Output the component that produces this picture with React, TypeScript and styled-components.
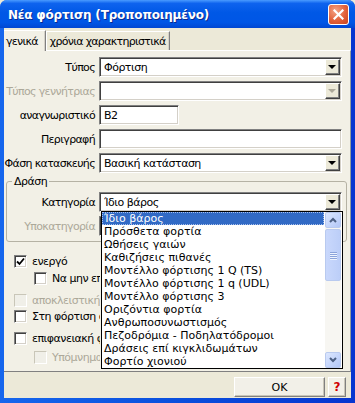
import React from 'react';
import styled, { createGlobalStyle } from 'styled-components';

const GlobalStyle = createGlobalStyle`
  html, body {
    margin: 0;
    padding: 0;
    background: #ECE9D8;
  }
  * {
    box-sizing: border-box;
  }
`;

const Window = styled.div`
  width: 355px;
  height: 403px;
  display: flex;
  flex-direction: column;
  background: linear-gradient(90deg, #1666ED 0%, #0A4FDD 50%, #0735D0 100%);
  border-radius: 7px 7px 0 0;
  font-family: "DejaVu Sans", Tahoma, sans-serif;
  font-size: 11px;
  letter-spacing: -0.5px;
  color: #000;
  overflow: hidden;
`;

const TitleBar = styled.div`
  height: 28px;
  flex: none;
  display: flex;
  align-items: center;
  justify-content: space-between;
  padding: 1px 6px 0 8px;
  background: linear-gradient(180deg, #4A9BFF 0%, #0E63EE 12%, #0058E6 45%, #0056E6 80%, #0147D2 100%);
`;

const Title = styled.span`
  color: #fff;
  font-family: "DejaVu Sans", sans-serif;
  font-weight: bold;
  font-size: 12px;
  letter-spacing: -0.2px;
  text-shadow: 1px 1px 0 #0B2A8F;
`;

const CloseButton = styled.div`
  width: 21px;
  height: 21px;
  border: 1px solid #fff;
  border-radius: 3px;
  background: radial-gradient(circle at 35% 30%, #F4A486 0%, #E2613A 55%, #C8431E 100%);
  display: flex;
  align-items: center;
  justify-content: center;
`;

const Client = styled.div`
  flex: 1;
  margin: 0 4px 5px;
  background: #ECE9D8;
  display: flex;
  flex-direction: column;
`;

const TabStrip = styled.div`
  height: 22px;
  flex: none;
  display: flex;
  align-items: flex-end;
`;

const Tab = styled.div<{ $active?: boolean }>`
  height: ${p => (p.$active ? 21 : 19)}px;
  padding: 0 ${p => (p.$active ? 7 : 3)}px 0 ${p => (p.$active ? 2 : 3)}px;
  display: flex;
  align-items: center;
  white-space: nowrap;
  letter-spacing: -0.7px;
  background: ${p => (p.$active ? '#F2F0E6' : '#ECE9D8')};
  border-top: 1px solid #fff;
  border-left: ${p => (p.$active ? '0' : '1px solid #fff')};
  border-right: 1px solid #808080;
  box-shadow: inset -1px 0 0 #D4D0C8;
  margin-bottom: ${p => (p.$active ? '-1px' : '0')};
  position: relative;
  z-index: ${p => (p.$active ? 1 : 0)};
`;

const Panel = styled.div`
  flex: 1;
  position: relative;
  background: #F2F0E6;
  border-top: 1px solid #fff;
  border-right: 1px solid #919B9C;
  border-bottom: 1px solid #808080;
  padding-top: 6px;
  display: flex;
  flex-direction: column;
`;

const FormGrid = styled.div<{ $labelWidth: number }>`
  display: grid;
  grid-template-columns: ${p => p.$labelWidth}px 243px;
  grid-auto-rows: 20px;
  column-gap: 4px;
  row-gap: 4px;
`;

const Label = styled.div<{ $disabled?: boolean }>`
  display: flex;
  align-items: center;
  justify-content: flex-end;
  white-space: nowrap;
  letter-spacing: -0.65px;
  color: ${p => (p.$disabled ? '#ACA899' : '#000')};
`;

const Sunken = styled.div<{ $width?: number }>`
  width: ${p => (p.$width ? `${p.$width}px` : '100%')};
  height: 20px;
  background: #fff;
  border: 1px solid;
  border-color: #808080 #fff #fff #808080;
  box-shadow: inset 1px 1px 0 #404040, inset -1px -1px 0 #D4D0C8;
  display: flex;
  align-items: center;
  padding: 1px 1px 1px 4px;
  position: relative;
`;

const FieldText = styled.span`
  flex: 1;
  white-space: nowrap;
  overflow: hidden;
`;

const ArrowButton = styled.div`
  width: 15px;
  height: 16px;
  flex: none;
  background: #ECE9D8;
  border: 1px solid;
  border-color: #fff #404040 #404040 #fff;
  box-shadow: inset -1px -1px 0 #808080;
  display: flex;
  align-items: center;
  justify-content: center;
`;

const Triangle = styled.div<{ $disabled?: boolean }>`
  width: 0;
  height: 0;
  border-left: 4px solid transparent;
  border-right: 4px solid transparent;
  border-top: 4px solid ${p => (p.$disabled ? '#ACA899' : '#000')};
  margin-left: -1px;
`;

const GroupBox = styled.fieldset`
  margin: 2px 3px 0 2px;
  padding: 4px 3px 5px 0;
  border: 1px solid #B5B2A4;
  border-radius: 3px;
  min-width: 0;
`;

const Legend = styled.legend`
  margin-left: 5px;
  padding: 0 2px;
  line-height: 13px;
  font-size: 11px;
`;

const CheckArea = styled.div`
  width: 96px;
  overflow: hidden;
`;

const CheckRow = styled.div<{ $indent?: boolean; $top: number; $disabled?: boolean }>`
  display: flex;
  align-items: center;
  height: 13px;
  margin-top: ${p => p.$top}px;
  padding-left: ${p => (p.$indent ? 30 : 10)}px;
  gap: 5px;
  white-space: nowrap;
  color: ${p => (p.$disabled ? '#ACA899' : '#000')};
`;

const CheckBox = styled.div<{ $disabled?: boolean }>`
  width: 13px;
  height: 13px;
  flex: none;
  background: ${p => (p.$disabled ? '#F0EFE8' : '#fff')};
  border: 1px solid;
  border-color: ${p => (p.$disabled ? '#C9C6B8 #fff #fff #C9C6B8' : '#808080 #fff #fff #808080')};
  box-shadow: ${p => (p.$disabled ? 'none' : 'inset 1px 1px 0 #404040, inset -1px -1px 0 #D4D0C8')};
  display: flex;
  align-items: center;
  justify-content: center;
`;

const DropList = styled.div`
  position: absolute;
  top: 100%;
  left: 1px;
  width: 242px;
  height: 158px;
  background: #fff;
  border: 1px solid #000;
  display: flex;
  z-index: 10;
  letter-spacing: 0;
`;

const Items = styled.div`
  flex: 1;
  overflow: hidden;
`;

const Item = styled.div<{ $selected?: boolean }>`
  height: 13px;
  line-height: 13px;
  padding-left: 2px;
  margin-right: 1px;
  white-space: nowrap;
  background: ${p => (p.$selected ? '#316AC5' : 'transparent')};
  color: ${p => (p.$selected ? '#fff' : '#000')};
  outline: ${p => (p.$selected ? '1px dotted #A8C0EC' : 'none')};
  outline-offset: -1px;
`;

const ScrollBar = styled.div`
  width: 16px;
  flex: none;
  margin-right: 1px;
  display: flex;
  flex-direction: column;
  background: #F7F6F2;
`;

const ScrollButton = styled.div`
  width: 16px;
  height: 16px;
  flex: none;
  border: 1px solid #B9CAEF;
  border-radius: 2px;
  background: linear-gradient(135deg, #DCE7FE 0%, #C3D4FB 60%, #B2C7F6 100%);
  display: flex;
  align-items: center;
  justify-content: center;
`;

const Thumb = styled.div`
  height: 52px;
  margin-top: 1px;
  flex: none;
  border: 1px solid #B9CAEF;
  border-radius: 2px;
  background: linear-gradient(90deg, #C9D8FC 0%, #BCCEF8 100%);
  display: flex;
  flex-direction: column;
  align-items: center;
  justify-content: center;
  gap: 1px;
`;

const Grip = styled.div`
  width: 7px;
  height: 1px;
  background: #8CA4DB;
  box-shadow: 0 1px 0 #EEF4FF;
`;

const Track = styled.div`
  flex: 1;
`;

const Footer = styled.div`
  height: 26px;
  flex: none;
  display: flex;
  justify-content: flex-end;
  gap: 3px;
  padding: 5px 5px 0 0;
`;

const Button = styled.div<{ $width: number }>`
  width: ${p => p.$width}px;
  height: 20px;
  background: #F2F0E8;
  border: 1px solid;
  border-color: #fff #808080 #808080 #fff;
  box-shadow: inset -1px -1px 0 #C8C5B8;
  display: flex;
  align-items: center;
  justify-content: center;
  letter-spacing: 0;
`;

const HelpMark = styled.span`
  color: #D00000;
  font-weight: bold;
  font-size: 12px;
`;

const categories = [
  'Ίδιο βάρος',
  'Πρόσθετα φορτία',
  'Ωθήσεις γαιών',
  'Καθιζήσεις πιθανές',
  'Μοντέλλο φόρτισης 1 Q (TS)',
  'Μοντέλλο φόρτισης 1 q (UDL)',
  'Μοντέλλο φόρτισης 3',
  'Οριζόντια φορτία',
  'Ανθρωποσυνωστισμός',
  'Πεζοδρόμια - Ποδηλατόδρομοι',
  'Δράσεις επί κιγκλιδωμάτων',
  'Φορτίο χιονιού',
];

const checks = [
  { text: 'ενεργό', checked: true, top: 13 },
  { text: 'Να μην επιτρέπεται', indent: true, top: 4 },
  { text: 'αποκλειστική φόρτιση', disabled: true, top: 9 },
  { text: 'Στη φόρτιση όλων', top: 3 },
  { text: 'επιφανειακή φόρτιση', top: 9 },
  { text: 'Υπόμνημα', indent: true, disabled: true, top: 6 },
];

const Combo: React.FC<{ value?: string; disabled?: boolean; children?: React.ReactNode }> = ({ value, disabled, children }) => (
  <Sunken>
    <FieldText>{value}</FieldText>
    <ArrowButton>
      <Triangle $disabled={disabled} />
    </ArrowButton>
    {children}
  </Sunken>
);

const Chevron: React.FC<{ up?: boolean }> = ({ up }) => (
  <svg width="8" height="6" viewBox="0 0 8 6">
    <polyline
      points={up ? '1,5 4,2 7,5' : '1,1 4,4 7,1'}
      fill="none"
      stroke="#4D6185"
      strokeWidth="2"
    />
  </svg>
);

const App: React.FC = () => {
  return (
    <>
      <GlobalStyle />
      <Window>
        <TitleBar>
          <Title>Νέα φόρτιση (Τροποποιημένο)</Title>
          <CloseButton>
            <svg width="11" height="11" viewBox="0 0 11 11">
              <path d="M1.5 1.5 L9.5 9.5 M9.5 1.5 L1.5 9.5" stroke="#fff" strokeWidth="2.2" strokeLinecap="square" />
            </svg>
          </CloseButton>
        </TitleBar>
        <Client>
          <TabStrip>
            <Tab $active>γενικά</Tab>
            <Tab>χρόνια χαρακτηριστικά</Tab>
          </TabStrip>
          <Panel>
            <FormGrid $labelWidth={91}>
              <Label>Τύπος</Label>
              <Combo value="Φόρτιση" />
              <Label $disabled>Τύπος γεννήτριας</Label>
              <Combo disabled />
              <Label>αναγνωριστικό</Label>
              <Sunken $width={80}>
                <FieldText>B2</FieldText>
              </Sunken>
              <Label>Περιγραφή</Label>
              <Sunken>
                <FieldText />
              </Sunken>
              <Label>Φάση κατασκευής</Label>
              <Combo value="Βασική κατάσταση" />
            </FormGrid>

            <GroupBox>
              <Legend>Δράση</Legend>
              <FormGrid $labelWidth={88}>
                <Label>Κατηγορία</Label>
                <Combo value="Ίδιο βάρος">
                  <DropList>
                    <Items>
                      {categories.map((c, i) => (
                        <Item key={c} $selected={i === 0}>{c}</Item>
                      ))}
                    </Items>
                    <ScrollBar>
                      <ScrollButton>
                        <Chevron up />
                      </ScrollButton>
                      <Thumb>
                        <Grip />
                        <Grip />
                        <Grip />
                        <Grip />
                      </Thumb>
                      <Track />
                      <ScrollButton>
                        <Chevron />
                      </ScrollButton>
                    </ScrollBar>
                  </DropList>
                </Combo>
                <Label $disabled>Υποκατηγορία</Label>
                <Combo disabled />
              </FormGrid>
            </GroupBox>

            <CheckArea>
              {checks.map(c => (
                <CheckRow key={c.text} $indent={c.indent} $top={c.top} $disabled={c.disabled}>
                  <CheckBox $disabled={c.disabled}>
                    {c.checked && (
                      <svg width="9" height="9" viewBox="0 0 9 9">
                        <path d="M1 4.5 L3.5 7 L8 1.5" fill="none" stroke="#000" strokeWidth="1.8" />
                      </svg>
                    )}
                  </CheckBox>
                  <span>{c.text}</span>
                </CheckRow>
              ))}
            </CheckArea>
          </Panel>
          <Footer>
            <Button $width={91}>OK</Button>
            <Button $width={18}>
              <HelpMark>?</HelpMark>
            </Button>
          </Footer>
        </Client>
      </Window>
    </>
  );
};

export default App;
